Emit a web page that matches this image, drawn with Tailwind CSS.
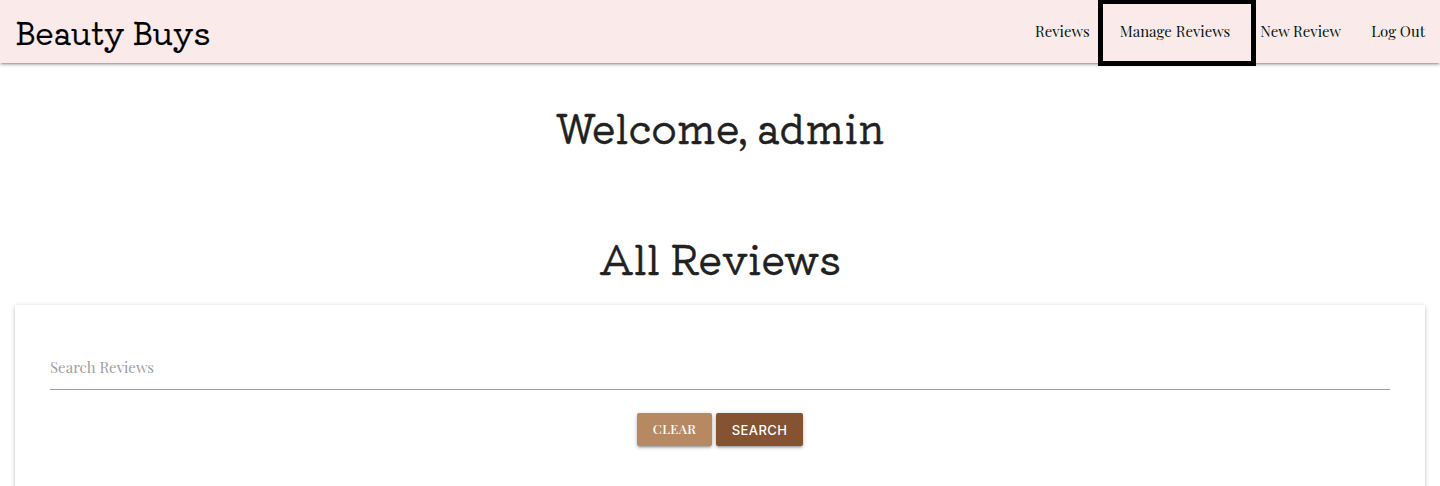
<!DOCTYPE html>
<html lang="en">
<head>
<meta charset="utf-8">
<title>Beauty Buys</title>
<script src="https://cdn.jsdelivr.net/npm/@tailwindcss/browser@4"></script>
</head>
<body class="flex h-[486px] flex-col overflow-hidden bg-white font-['Playfair_Display','Liberation_Serif',serif] text-[15px] text-[#212121] antialiased">
<nav class="flex h-[63px] shrink-0 items-center justify-between bg-[#faebea] px-[15px] text-black shadow-[0_2px_2px_0_rgba(0,0,0,0.14),0_3px_1px_-2px_rgba(0,0,0,0.12),0_1px_5px_0_rgba(0,0,0,0.2)]">
<a class="font-['Kiwi_Maru','Solway',serif] text-[31.5px] leading-[63px] whitespace-nowrap [-webkit-text-stroke:0.2px]">Beauty Buys</a>
<div class="flex gap-[30px] leading-[63px] whitespace-nowrap text-[#03160f]">
<a>Reviews</a>
<a class="relative">Manage Reviews<span class="absolute top-0 -left-[22px] h-[66px] w-[158px] border-[5px] border-t-4 border-black"></span></a>
<a>New Review</a>
<a>Log Out</a>
</div>
</nav>
<h1 class="mt-[39px] text-center font-['Kiwi_Maru','Solway',serif] text-[40px] leading-[50px] [-webkit-text-stroke:0.4px]">Welcome, admin</h1>
<h2 class="mt-[81px] text-center font-['Kiwi_Maru','Solway',serif] text-[40px] leading-[50px] [-webkit-text-stroke:0.4px]">All Reviews</h2>
<main class="mx-[15px] mt-[22px] h-[201px] shrink-0 rounded-t-[2px] bg-white px-[35px] pt-[40px] shadow-[0_2px_2px_0_rgba(0,0,0,0.14),0_3px_1px_-2px_rgba(0,0,0,0.12),0_1px_5px_0_rgba(0,0,0,0.2)]">
<div class="h-[45px] border-b border-[#9e9e9e] leading-[45px] text-[#9e9e9e]">Search Reviews</div>
<div class="mt-[23px] flex justify-center gap-1 text-white">
<button class="h-[33px] w-[75px] rounded-[2px] bg-[#b78963] pb-0.5 text-[13px] font-medium tracking-[0.4px] shadow-[0_2px_2px_0_rgba(0,0,0,0.14),0_3px_1px_-2px_rgba(0,0,0,0.12),0_1px_5px_0_rgba(0,0,0,0.2)]">CLEAR</button>
<button class="h-[33px] w-[87px] rounded-[2px] bg-[#855232] pt-0.5 font-['Inter',sans-serif] text-[13px] font-medium tracking-[0.4px] shadow-[0_2px_2px_0_rgba(0,0,0,0.14),0_3px_1px_-2px_rgba(0,0,0,0.12),0_1px_5px_0_rgba(0,0,0,0.2)]">SEARCH</button>
</div>
</main>
</body>
</html>
